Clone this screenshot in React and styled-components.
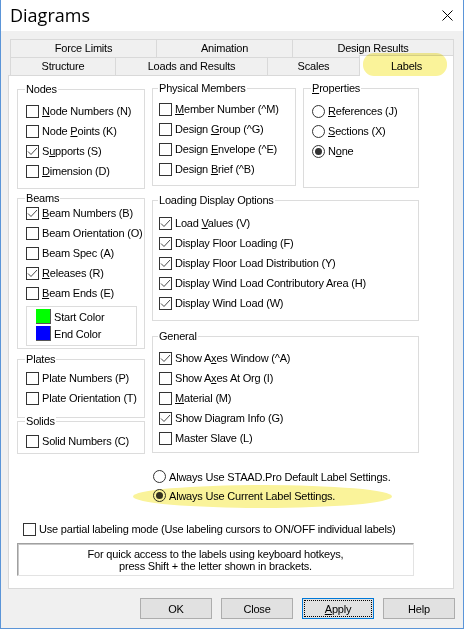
import React from "react";
import styled, { createGlobalStyle } from "styled-components";

const GlobalStyle = createGlobalStyle`
  body {
    margin: 0;
    background: #f0f0f0;
    font-family: "Liberation Sans", Arial, sans-serif;
    font-size: 11px;
    letter-spacing: -0.2px;
    color: #000;
  }
`;

// data
const backTabs = [
  { label: "Force Limits", w: 146 },
  { label: "Animation", w: 136 },
  { label: "Design Results", w: 162 },
];
const frontTabs = [
  { label: "Structure", w: 105 },
  { label: "Loads and Results", w: 152 },
  { label: "Scales", w: 92 },
  { label: "Labels", w: 95, active: true },
];

const nodes = [
  { text: "Node Numbers (N)", k: 0 },
  { text: "Node Points (K)", k: 5 },
  { text: "Supports (S)", k: 1, on: true },
  { text: "Dimension (D)", k: 0 },
];
const members = [
  { text: "Member Number (^M)", k: 0 },
  { text: "Design Group (^G)", k: 7 },
  { text: "Design Envelope (^E)", k: 7 },
  { text: "Design Brief (^B)", k: 7 },
];
const props = [
  { text: "References (J)", k: 0 },
  { text: "Sections (X)", k: 0 },
  { text: "None", k: 1, on: true },
];
const beams = [
  { text: "Beam Numbers (B)", k: 0, on: true },
  { text: "Beam Orientation (O)" },
  { text: "Beam Spec (A)" },
  { text: "Releases (R)", k: 0, on: true },
  { text: "Beam Ends (E)", k: 0 },
];
const loading = [
  { text: "Load Values (V)", k: 5, on: true },
  { text: "Display Floor Loading (F)", on: true },
  { text: "Display Floor Load Distribution (Y)", on: true },
  { text: "Display Wind Load Contributory Area (H)", on: true },
  { text: "Display Wind Load (W)", on: true },
];
const general = [
  { text: "Show Axes Window (^A)", k: 6, on: true },
  { text: "Show Axes At Org (I)", k: 6 },
  { text: "Material (M)", k: 0 },
  { text: "Show Diagram Info (G)", on: true },
  { text: "Master Slave (L)" },
];

// Components
const Mnemonic = ({ text, k }) =>
  k == null ? (
    text
  ) : (
    <>
      {text.slice(0, k)}
      <u>{text[k]}</u>
      {text.slice(k + 1)}
    </>
  );

const CheckRow = ({ text, k, on }) => (
  <Row>
    <Box>
      {on && (
        <svg width="11" height="11" viewBox="0 0 11 11">
          <path d="M1 5.5 L4 8.5 L10 2" fill="none" stroke="#4a4a4a" strokeWidth="1" />
        </svg>
      )}
    </Box>
    <span>
      <Mnemonic text={text} k={k} />
    </span>
  </Row>
);

const RadioRow = ({ text, k, on }) => (
  <Row>
    <Circle>{on && <Dot />}</Circle>
    <span>
      <Mnemonic text={text} k={k} />
    </span>
  </Row>
);

const Group = ({ title, h, pt, pl = 8, children }) => (
  <GroupBox $h={h} $pt={pt} $pl={pl}>
    <Caption $left={pl - 1}>{title}</Caption>
    {children}
  </GroupBox>
);

const App = () => {
  return (
    <Window>
      <GlobalStyle />
      <TitleBar>
        <Title>Diagrams</Title>
        <CloseBtn>
          <svg width="11" height="11" viewBox="0 0 11 11">
            <path d="M0.5 0.5 L10.5 10.5 M10.5 0.5 L0.5 10.5" stroke="#000" strokeWidth="1" />
          </svg>
        </CloseBtn>
      </TitleBar>
      <Body>
        <Tabs>
          <TabRow>
            {backTabs.map((t) => (
              <Tab key={t.label} $w={t.w}>
                {t.label}
              </Tab>
            ))}
          </TabRow>
          <TabRow>
            {frontTabs.map((t) => (
              <Tab key={t.label} $w={t.w} $active={t.active}>
                <TabText>{t.label}</TabText>
                {t.active && <TabMark />}
              </Tab>
            ))}
          </TabRow>
        </Tabs>
        <Panel>
          <Groups>
            <Column>
              <Group title="Nodes" h={100} pt={11}>
                {nodes.map((r) => (
                  <CheckRow key={r.text} {...r} />
                ))}
              </Group>
              <Spacer $h={9} />
              <Group title="Beams" h={151} pt={4}>
                {beams.map((r) => (
                  <CheckRow key={r.text} {...r} />
                ))}
                <ColorBox>
                  <ColorRow>
                    <Swatch $c="#00ff00" />
                    Start Color
                  </ColorRow>
                  <ColorRow>
                    <Swatch $c="#0000ff" />
                    End Color
                  </ColorRow>
                </ColorBox>
              </Group>
              <Spacer $h={10} />
              <Group title="Plates" h={59} pt={8}>
                <CheckRow text="Plate Numbers (P)" />
                <CheckRow text="Plate Orientation (T)" />
              </Group>
              <Spacer $h={3} />
              <Group title="Solids" h={33} pt={9}>
                <CheckRow text="Solid Numbers (C)" />
              </Group>
            </Column>
            <Column $shift={-1}>
              <Pair>
                <Group title="Physical Members" h={98} pt={10} pl={6}>
                  {members.map((r) => (
                    <CheckRow key={r.text} {...r} />
                  ))}
                </Group>
                <Group title={<Mnemonic text="Properties" k={0} />} h={100} pt={12}>
                  {props.map((r) => (
                    <RadioRow key={r.text} {...r} />
                  ))}
                </Group>
              </Pair>
              <Spacer $h={12} />
              <Group title="Loading Display Options" h={121} pt={12} pl={6}>
                {loading.map((r) => (
                  <CheckRow key={r.text} {...r} />
                ))}
              </Group>
              <Spacer $h={15} />
              <Group title="General" h={117} pt={11} pl={6}>
                {general.map((r) => (
                  <CheckRow key={r.text} {...r} />
                ))}
              </Group>
            </Column>
          </Groups>
          <Defaults>
            <ShortRow>
              <RadioRow text="Always Use STAAD.Pro Default Label Settings." />
            </ShortRow>
            <ShortRow>
              <RadioRow text="Always Use Current Label Settings." on />
              <RowMark />
            </ShortRow>
          </Defaults>
          <Partial>
            <CheckRow text="Use partial labeling mode (Use labeling cursors to ON/OFF individual labels)" />
          </Partial>
          <InfoBox>
            For quick access to the labels using keyboard hotkeys,
            <br />
            press Shift + the letter shown in brackets.
          </InfoBox>
        </Panel>
        <Buttons>
          <Button>OK</Button>
          <Button>Close</Button>
          <Button $focus>
            <Focus>
              <u>A</u>pply
            </Focus>
          </Button>
          <Button>Help</Button>
        </Buttons>
      </Body>
    </Window>
  );
};

// Styles
const Window = styled.div`
  width: 464px;
  height: 629px;
  box-sizing: border-box;
  border: 1px solid #5b95d8;
  border-top: none;
  background: #f0f0f0;
  overflow: hidden;
`;
const TitleBar = styled.div`
  height: 31px;
  background: #fff;
  display: flex;
  align-items: center;
  justify-content: space-between;
  padding: 0 10px 0 9px;
`;
const Title = styled.div`
  font-family: "Open Sans", "Noto Sans", sans-serif;
  font-size: 18px;
  letter-spacing: 0;
  margin-top: -2px;
`;
const CloseBtn = styled.div`
  display: flex;
  margin-top: -1px;
`;
const Body = styled.div`
  padding: 8px 0 0 7px;
`;
const Tabs = styled.div`
  margin-left: 2px;
  position: relative;
  z-index: 1;
`;
const TabRow = styled.div`
  display: flex;
  align-items: flex-end;
`;
const Tab = styled.div`
  position: relative;
  box-sizing: border-box;
  width: ${(p) => p.$w}px;
  height: ${(p) => (p.$active ? 21 : 18)}px;
  margin-top: ${(p) => (p.$active ? -2 : 0)}px;
  margin-bottom: ${(p) => (p.$active ? -1 : 0)}px;
  background: ${(p) => (p.$active ? "#fff" : "#f0f0f0")};
  border: 1px solid #d9d9d9;
  border-bottom: none;
  border-right: none;
  display: flex;
  align-items: center;
  justify-content: center;
  padding-bottom: 1px;
  &:last-child {
    border-right: 1px solid #d9d9d9;
  }
`;
const TabMark = styled.span`
  position: absolute;
  left: 3px;
  top: -3px;
  width: 84px;
  height: 23px;
  border-radius: 11px;
  background: #faf39a;
  mix-blend-mode: multiply;
`;
const TabText = styled.span`
  position: relative;
`;
const Panel = styled.div`
  box-sizing: border-box;
  width: 446px;
  height: 514px;
  background: #fff;
  border: 1px solid #d9d9d9;
  padding: 13px 0 0 8px;
`;
const Groups = styled.div`
  display: grid;
  grid-template-columns: 128px 267px;
  column-gap: 7px;
  align-items: start;
`;
const Column = styled.div`
  display: flex;
  flex-direction: column;
  margin-top: ${(p) => p.$shift || 0}px;
`;
const Pair = styled.div`
  display: grid;
  grid-template-columns: 144px 116px;
  column-gap: 7px;
  align-items: start;
`;
const Spacer = styled.div`
  height: ${(p) => p.$h}px;
  flex: none;
`;
const GroupBox = styled.div`
  position: relative;
  box-sizing: border-box;
  height: ${(p) => p.$h}px;
  border: 1px solid #dcdcdc;
  padding: ${(p) => p.$pt}px 0 0 ${(p) => p.$pl}px;
`;
const Caption = styled.span`
  position: absolute;
  top: -8px;
  left: ${(p) => p.$left}px;
  padding: 0 1px;
  line-height: 14px;
  background: #fff;
  white-space: nowrap;
`;
const Row = styled.div`
  position: relative;
  height: 20px;
  display: flex;
  align-items: center;
  white-space: nowrap;
`;
const Box = styled.span`
  box-sizing: border-box;
  width: 13px;
  height: 13px;
  flex: none;
  border: 1px solid #333;
  background: #fff;
  margin-right: 3px;
  display: flex;
  align-items: center;
  justify-content: center;
`;
const Circle = styled.span`
  box-sizing: border-box;
  width: 13px;
  height: 13px;
  flex: none;
  border: 1px solid #333;
  border-radius: 50%;
  background: #fff;
  margin-right: 3px;
  display: flex;
  align-items: center;
  justify-content: center;
`;
const Dot = styled.span`
  width: 7px;
  height: 7px;
  border-radius: 50%;
  background: #333;
`;
const ColorBox = styled.div`
  box-sizing: border-box;
  width: 111px;
  height: 40px;
  margin-top: 3px;
  border: 1px solid #dcdcdc;
  padding: 1px 0 0 9px;
`;
const ColorRow = styled.div`
  height: 17px;
  display: flex;
  align-items: center;
`;
const Swatch = styled.span`
  box-sizing: border-box;
  width: 15px;
  height: 15px;
  margin-right: 3px;
  background: ${(p) => p.$c};
  border-right: 1px solid #555;
  border-bottom: 1px solid #555;
`;
const Defaults = styled.div`
  margin: 13px 0 0 136px;
`;
const ShortRow = styled.div`
  position: relative;
  height: 19px;
  display: flex;
  align-items: center;
  & > div {
    height: 19px;
  }
`;
const RowMark = styled.span`
  position: absolute;
  left: -20px;
  top: -1px;
  width: 259px;
  height: 23px;
  border-radius: 50%;
  background: #faf39a;
  mix-blend-mode: multiply;
`;
const Partial = styled.div`
  margin: 14px 0 0 6px;
`;
const InfoBox = styled.div`
  box-sizing: border-box;
  width: 397px;
  height: 33px;
  margin-top: 4px;
  border: 1px solid;
  border-color: #a0a0a0 #e3e3e3 #e3e3e3 #a0a0a0;
  box-shadow: inset 1px 1px 0 #c8c8c8;
  padding-top: 4px;
  text-align: center;
  line-height: 12px;
`;
const Buttons = styled.div`
  display: flex;
  justify-content: flex-end;
  gap: 9px;
  margin-top: 9px;
  padding-right: 8px;
`;
const Button = styled.div`
  box-sizing: border-box;
  width: 72px;
  height: 21px;
  background: #e1e1e1;
  border: 1px solid ${(p) => (p.$focus ? "#0078d7" : "#adadad")};
  display: flex;
  align-items: center;
  justify-content: center;
  padding: ${(p) => (p.$focus ? "1px" : "0")};
`;
const Focus = styled.span`
  box-sizing: border-box;
  width: 100%;
  height: 100%;
  border: 1px dotted #000;
  display: flex;
  align-items: center;
  justify-content: center;
`;

export default App;
